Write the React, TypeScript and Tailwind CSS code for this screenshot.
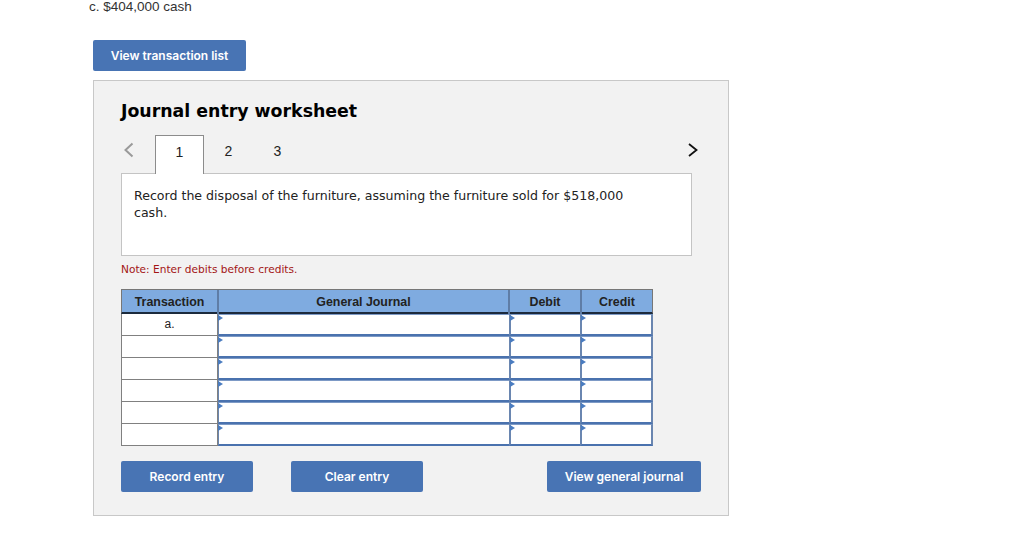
import React from 'react'

const rows = ['a.', '', '', '', '', '']

function Btn({ label, className }: { label: string; className: string }) {
  return (
    <button
      type="button"
      className={`flex h-[31px] items-center justify-center rounded-[2px] bg-[#4874b4] font-['Inter',sans-serif] text-[12px] font-semibold text-white ${className}`}
    >
      {label}
    </button>
  )
}

function EntryCell({ className }: { className: string }) {
  return (
    <div className={`relative border-t border-b-[2px] border-t-[#7d9ac6] border-b-[#4a72ae] border-l-[#6a86b0] bg-white ${className}`}>
      <span className="absolute left-[-1px] top-0 h-0 w-0 border-y-[3px] border-l-[5px] border-y-transparent border-l-[#4a7cc0]" />
    </div>
  )
}

export default function App() {
  return (
    <div className="h-[560px] w-[1024px] overflow-hidden bg-white">
      <div className="ml-[89px] h-[40px] font-['Liberation_Sans',sans-serif] text-[13.5px] leading-[13px] text-[#333]">
        c. $404,000 cash
      </div>
      <div className="ml-[93px] flex flex-col">
        <Btn label="View transaction list" className="w-[153px]" />
        <div className="mt-[9px] flex h-[436px] w-[636px] flex-col border border-[#c8c8c8] bg-[#f2f2f2] pl-[27px]">
          <h1 className="mt-[18px] font-['DejaVu_Sans',sans-serif] text-[17.35px] font-bold leading-[24px] text-black">
            Journal entry worksheet
          </h1>

          <div className="relative mt-[12px] flex h-[38px] items-center pl-[34px] font-['Liberation_Sans',sans-serif] text-[14px] text-[#222]">
            <svg className="absolute left-[1px] top-[6px]" width="14" height="18" viewBox="0 0 14 18" fill="none">
              <path d="M10.5 2.5 3.5 9l7 6.5" stroke="#9a9a9a" strokeWidth="2" />
            </svg>
            <svg className="absolute left-[565px] top-[6px]" width="14" height="18" viewBox="0 0 14 18" fill="none">
              <path d="M3 3l7.5 6L3 15" stroke="#111" strokeWidth="1.8" />
            </svg>
            <div className="z-10 mb-[-1px] flex h-[39px] w-[49px] items-center justify-center border border-b-0 border-[#8c8c8c] bg-white pb-[6px]">
              1
            </div>
            <div className="flex w-[49px] items-center justify-center pb-[6px]">2</div>
            <div className="flex w-[49px] items-center justify-center pb-[6px]">3</div>
          </div>

          <div className="h-[83px] w-[571px] border border-[#c4c4c4] bg-white pl-[12px] pr-[60px] pt-[13px] font-['DejaVu_Sans',sans-serif] text-[12.58px] leading-[17px] text-[#222]">
            Record the disposal of the furniture, assuming the furniture sold for $518,000 cash.
          </div>

          <p className="mt-[6px] font-['DejaVu_Sans',sans-serif] text-[10.6px] leading-[14px] text-[#a31515]">
            Note: Enter debits before credits.
          </p>

          <div className="mt-[13px] w-[532px] font-['Liberation_Sans',sans-serif] text-[#222]">
            <div className="grid h-[25px] grid-cols-[97px_291px_72px_70px] border border-b-2 border-[#777] border-b-[#1c2a3c] bg-[#7fabe0] text-[12.4px] font-bold leading-[24px]">
              <div className="border-r-2 border-[#5f7da6] text-center">Transaction</div>
              <div className="border-r-2 border-[#5f7da6] text-center">General Journal</div>
              <div className="border-r-2 border-[#5f7da6] text-center">Debit</div>
              <div className="text-center">Credit</div>
            </div>
            {rows.map((t, i) => (
              <div key={i} className="grid h-[22px] grid-cols-[97px_291px_71px_73px]">
                <div className="border-x border-b border-[#808080] bg-white text-center text-[12px] leading-[20px]">{t}</div>
                <EntryCell className="border-l" />
                <EntryCell className="border-l-[2px]" />
                <EntryCell className="border-x-[2px] border-r-[#6a86b0]" />
              </div>
            ))}
          </div>

          <div className="mt-[15px] flex w-[580px]">
            <Btn label="Record entry" className="w-[132px]" />
            <Btn label="Clear entry" className="ml-[38px] w-[132px]" />
            <Btn label="View general journal" className="ml-auto w-[154px]" />
          </div>
        </div>
      </div>
    </div>
  )
}
